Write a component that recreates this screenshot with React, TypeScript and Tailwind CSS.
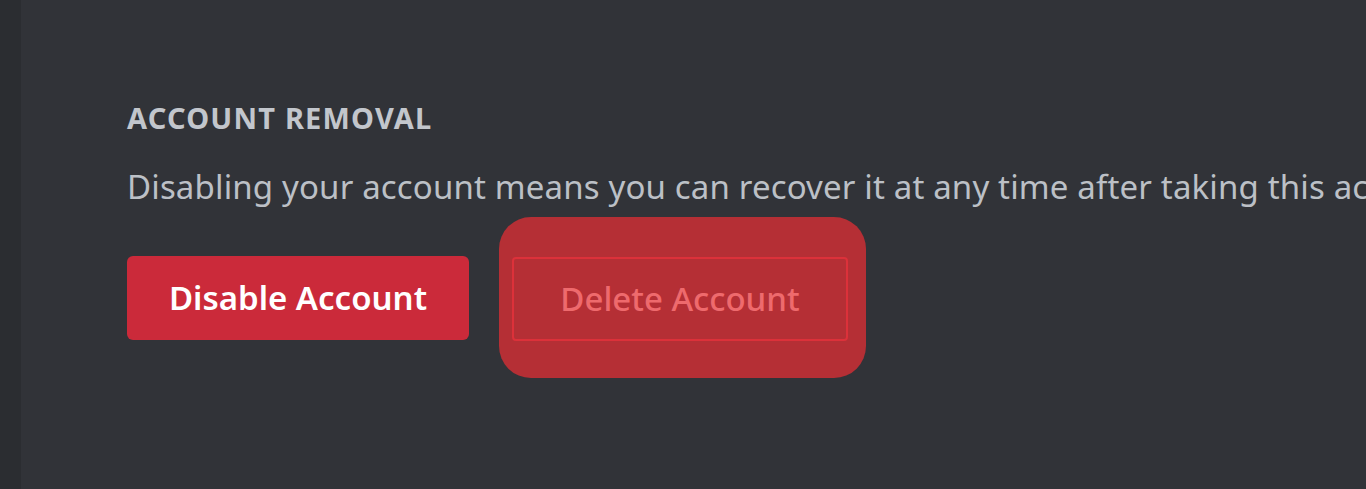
import React from "react";

export default function App() {
  return (
    <div
      className="flex h-[489px] w-[1366px] overflow-hidden bg-[#313338]"
      style={{ fontFamily: '"Noto Sans", "Open Sans", sans-serif' }}
    >
      <div className="w-[21px] shrink-0 bg-[#2b2d31]" />
      <div className="flex min-w-0 flex-1 flex-col pl-[106px] pt-[98px]">
        <h2 className="whitespace-nowrap text-[29px] font-bold leading-[40px] tracking-[1.2px] text-[#c2c6cc]">
          ACCOUNT REMOVAL
        </h2>
        <p className="mt-[27px] whitespace-nowrap text-[33px] leading-[44px] tracking-[0.15px] text-[#bcc0c6]">
          Disabling your account means you can recover it at any time after taking this action.
        </p>
        <div className="mt-[8px] flex items-center">
          <button className="flex h-[84px] w-[342px] items-center justify-center rounded-[6px] bg-[#cb2a3a] text-[33px] font-semibold text-white">
            Disable Account
          </button>
          <div className="ml-[30px] rounded-[32px] bg-[#b52f35] pb-[37px] pl-[13px] pr-[18px] pt-[40px]">
            <button className="flex h-[84px] w-[336px] items-center justify-center rounded-[4px] border-2 border-[#dc313a] text-[33px] font-medium text-[#ee6a6d]">
              Delete Account
            </button>
          </div>
        </div>
      </div>
    </div>
  );
}
